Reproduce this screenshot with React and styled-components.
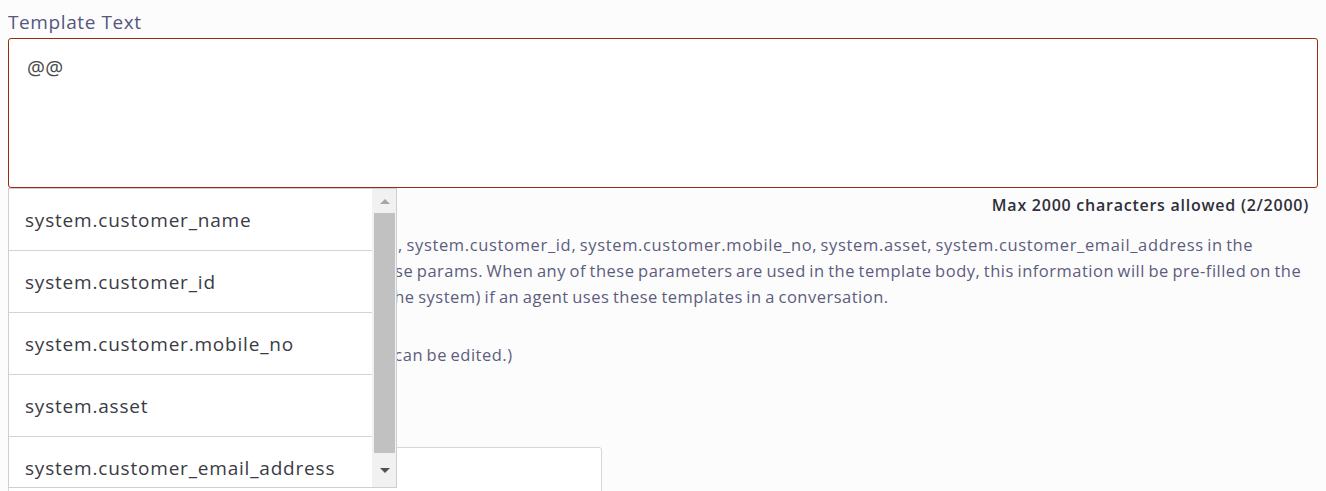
import React from "react";
import styled, { createGlobalStyle } from "styled-components";

const GlobalStyle = createGlobalStyle`
  html, body { margin: 0; padding: 0; background: #fcfcfc; }
  body { font-family: "Open Sans", "Noto Sans", sans-serif; }
  * { box-sizing: border-box; }
`;

const Page = styled.div`
  padding: 9px 8px 0 8px;
  height: 491px;
  overflow: hidden;
`;

const FieldLabel = styled.label`
  display: block;
  font-size: 19px;
  letter-spacing: 0.6px;
  line-height: 26px;
  color: #55577c;
  margin-bottom: 3px;
`;

const Field = styled.div`
  position: relative;
`;

const TextArea = styled.textarea`
  display: block;
  width: 100%;
  height: 150px;
  margin: 0;
  border: 1px solid #9a2c0e;
  border-radius: 3px;
  padding: 15px 18px;
  font-family: "Open Sans", "Noto Sans", sans-serif;
  font-size: 20px;
  letter-spacing: 0.4px;
  line-height: 28px;
  color: #4a4a4a;
  background: #fff;
  resize: none;
  outline: none;
`;

const Counter = styled.div`
  margin-top: 6px;
  padding-right: 9px;
  text-align: right;
  font-size: 16px;
  font-weight: 600;
  letter-spacing: 0.75px;
  line-height: 22px;
  color: #2f2f3b;
`;

const Help = styled.p`
  margin: ${(p) => p.$gap}px 0 0 0;
  padding-right: 6px;
  font-size: 16.5px;
  letter-spacing: 0.5px;
  word-spacing: -1.2px;
  line-height: 26px;
  color: #5c5c7e;
`;

const Param = styled.span`
  letter-spacing: 0.65px;
`;

const SubLabel = styled.div`
  margin-top: 40px;
  font-size: 19px;
  letter-spacing: 0.6px;
  line-height: 26px;
  color: #55577c;
`;

const Input = styled.div`
  margin-top: 13px;
  width: 594px;
  height: 48px;
  border: 1px solid #d6d6d6;
  border-radius: 3px;
  background: #fff;
`;

const Dropdown = styled.div`
  position: absolute;
  top: 150px;
  left: 0;
  width: 389px;
  height: 300px;
  border: 1px solid #cfcfcf;
  background: #fff;
  display: flex;
  z-index: 10;
`;

const List = styled.ul`
  flex: 1;
  margin: 0;
  padding: 0;
  list-style: none;
  overflow: hidden;
`;

const Item = styled.li`
  height: 62px;
  display: flex;
  align-items: center;
  padding-left: 16px;
  padding-top: 1px;
  border-bottom: 1px solid #d3d3d3;
  font-size: 19px;
  letter-spacing: 0.8px;
  color: #3b3b45;
  white-space: nowrap;
`;

const ScrollBar = styled.div`
  width: 24px;
  background: #f1f1f1;
  display: flex;
  flex-direction: column;
`;

const ArrowButton = styled.div`
  height: ${(p) => p.$h}px;
  display: flex;
  align-items: center;
  justify-content: center;
  padding-left: 1px;
`;

const Triangle = styled.span`
  width: 0;
  height: 0;
  border-left: 5px solid transparent;
  border-right: 5px solid transparent;
  ${(p) =>
    p.$up
      ? `border-bottom: 5px solid #a6a6a6;`
      : `border-top: 5px solid #505050;`}
`;

const Thumb = styled.div`
  height: 240px;
  margin: 0 1px 0 2px;
  background: #c1c1c1;
`;

const Spacer = styled.div`
  flex: 1;
  display: flex;
  flex-direction: column;
  justify-content: flex-end;
`;

const options = [
  "system.customer_name",
  "system.customer_id",
  "system.customer.mobile_no",
  "system.asset",
  "system.customer_email_address",
];

export default function App() {
  return (
    <>
      <GlobalStyle />
      <Page>
        <FieldLabel>Template Text</FieldLabel>
        <Field>
          <TextArea defaultValue="@@" readOnly />
          <Dropdown>
            <List>
              {options.map((o) => (
                <Item key={o}>{o}</Item>
              ))}
            </List>
            <ScrollBar>
              <ArrowButton $h={24}>
                <Triangle $up />
              </ArrowButton>
              <Thumb />
              <Spacer>
                <ArrowButton $h={34}>
                  <Triangle />
                </ArrowButton>
              </Spacer>
            </ScrollBar>
          </Dropdown>
        </Field>
        <Counter>Max 2000 characters allowed (2/2000)</Counter>
        <Help $gap={16}>
          You can use macros like <Param>system.customer_name</Param>,{" "}
          <Param>system.customer_id</Param>,{" "}
          <Param>system.customer.mobile_no</Param>,{" "}
          <Param>system.asset</Param>,{" "}
          <Param>system.customer_email_address</Param> in the template body.
          Type @@ in this field to show these params. When any of these
          parameters are used in the template body, this information will be
          pre-filled on the conversation screen (if the details are stored
          in the system) if an agent uses these templates in a conversation.
        </Help>
        <Help $gap={32}>
          (NOTE: Only the text outside of all these params can be edited.)
        </Help>
        <SubLabel>Category</SubLabel>
        <Input />
      </Page>
    </>
  );
}
